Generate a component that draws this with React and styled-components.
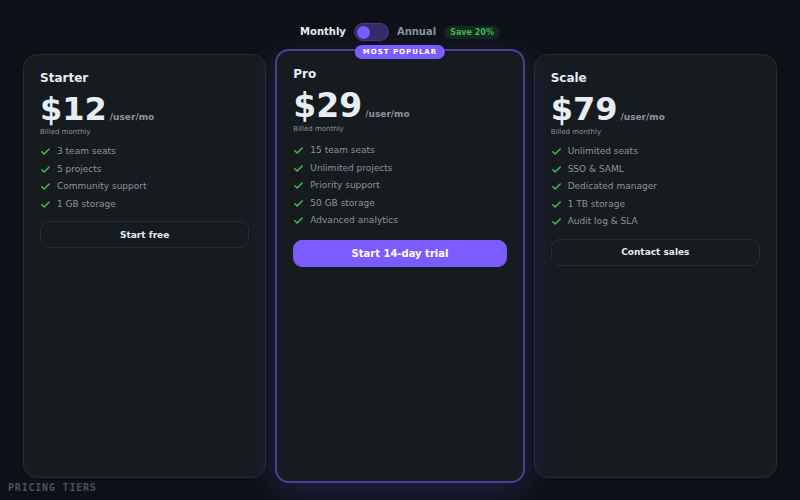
import { useState } from "react";
import styled, { createGlobalStyle, css } from "styled-components";

const tiers = [
    {
        name: "Starter",
        price: 12,
        features: ["3 team seats", "5 projects", "Community support", "1 GB storage"],
        action: "Start free",
    },
    {
        name: "Pro",
        price: 29,
        features: ["15 team seats", "Unlimited projects", "Priority support", "50 GB storage", "Advanced analytics"],
        action: "Start 14-day trial",
        popular: true,
    },
    {
        name: "Scale",
        price: 79,
        features: ["Unlimited seats", "SSO & SAML", "Dedicated manager", "1 TB storage", "Audit log & SLA"],
        action: "Contact sales",
    },
];

const CheckIcon = () => (
    <Check viewBox="0 0 24 24" aria-hidden="true">
        <path d="M4 12.5l5 5L20 6.5" />
    </Check>
);

// one pricing card, the popular one is bigger and has a badge on its top edge
const Tier = ({ tier, annual }) => {
    const price = annual ? Math.round(tier.price * 0.8) : tier.price;

    return (
        <Card $popular={tier.popular}>
            {tier.popular && <Ribbon>MOST POPULAR</Ribbon>}
            <Name>{tier.name}</Name>
            <Price $popular={tier.popular}>
                ${price}
                <Unit>/user/mo</Unit>
            </Price>
            <Billing>{annual ? "Billed annually" : "Billed monthly"}</Billing>
            <Features $popular={tier.popular}>
                {tier.features.map((feature) => (
                    <Feature key={feature}>
                        <CheckIcon />
                        {feature}
                    </Feature>
                ))}
            </Features>
            <Action type="button" $popular={tier.popular}>{tier.action}</Action>
        </Card>
    );
};

const App = () => {
    const [annual, setAnnual] = useState(false);

    return (
        <Page>
            <GlobalStyle />
            <BillingBar>
                <Period $active={!annual} htmlFor="billing">Monthly</Period>
                <Switch
                    id="billing"
                    type="checkbox"
                    role="switch"
                    checked={annual}
                    onChange={(e) => setAnnual(e.target.checked)}
                />
                <Period $active={annual} htmlFor="billing">Annual</Period>
                <Saving>Save 20%</Saving>
            </BillingBar>
            <Tiers>
                {tiers.map((tier) => (
                    <Tier key={tier.name} tier={tier} annual={annual} />
                ))}
            </Tiers>
            <Caption>PRICING TIERS</Caption>
        </Page>
    );
};

const GlobalStyle = createGlobalStyle`
    :root {
        --color-background: #0d1117;
        --color-card: #161b20;
        --color-line: #262c34;
        --color-text: #e6edf3;
        --color-muted: #8b949e;
        --color-accent: #7c5cff;
        --color-success: #3fb950;
    }
    * {
        box-sizing: border-box;
    }
    body {
        margin: 0;
        background: var(--color-background);
        color: var(--color-text);
        font-family: "DejaVu Sans", sans-serif;
    }
`
const Page = styled.main`
    position: relative;
    display: flex;
    flex-direction: column;
    gap: 13px;
    min-height: 100vh;
    padding: 23px 23px 22px;
    overflow: hidden;
`
const BillingBar = styled.div`
    display: flex;
    align-items: center;
    justify-content: center;
    gap: 8px;
`
const Period = styled.label`
    font-size: 10px;
    font-weight: 700;
    line-height: 10px;
    color: ${({ $active }) => ($active ? "var(--color-text)" : "var(--color-muted)")};
    cursor: pointer;
`
const Switch = styled.input`
    appearance: none;
    display: flex;
    align-items: center;
    width: 35px;
    height: 18px;
    margin: 0;
    padding: 0 2px;
    border: 1px solid #453b80;
    border-radius: 9px;
    background: #352b66;
    cursor: pointer;
    &::before {
        content: "";
        width: 13px;
        height: 13px;
        border-radius: 50%;
        background: var(--color-accent);
    }
    &:checked {
        justify-content: flex-end;
    }
`
const Saving = styled.span`
    padding: 0 6px;
    border-radius: 7px;
    background: #14291f;
    color: var(--color-success);
    font-size: 8px;
    font-weight: 700;
    line-height: 13px;
`
const Tiers = styled.div`
    flex: 1;
    display: grid;
    grid-template-columns: repeat(3, 1fr);
    gap: 12px;
`
const Card = styled.section`
    position: relative;
    display: flex;
    flex-direction: column;
    padding: 16px;
    border: 1px solid var(--color-line);
    border-radius: 14px;
    background: var(--color-card);
    ${({ $popular }) => $popular && css`
        z-index: 1;
        margin: -5px -3px;
        border: 2px solid #4c3d99;
        box-shadow: 0 8px 32px rgba(124, 92, 255, 0.2);
    `}
`
const Ribbon = styled.span`
    position: absolute;
    top: 1px;
    left: 50%;
    transform: translate(-50%, -50%);
    padding: 0 8px;
    border-radius: 7px;
    background: var(--color-accent);
    color: #fff;
    font-size: 7px;
    font-weight: 700;
    letter-spacing: 1px;
    line-height: 14px;
    white-space: nowrap;
`
const Name = styled.h2`
    margin: 0 0 8px;
    font-size: 12px;
    line-height: 14px;
`
const Price = styled.div`
    font-size: ${({ $popular }) => ($popular ? "33px" : "32px")};
    font-weight: 700;
    line-height: 1;
`
const Unit = styled.span`
    margin-left: 3px;
    color: var(--color-muted);
    font-size: 9px;
`
const Billing = styled.div`
    margin-top: 2px;
    color: var(--color-muted);
    font-size: 7px;
    line-height: 10px;
`
const Features = styled.ul`
    display: flex;
    flex-direction: column;
    gap: 4px;
    margin: ${({ $popular }) => ($popular ? "10px 0 12px" : "8px 0 10px")};
    padding: 0;
    list-style: none;
`
const Feature = styled.li`
    display: flex;
    align-items: center;
    gap: 6px;
    color: var(--color-muted);
    font-size: 9px;
    line-height: 1.5;
`
const Check = styled.svg`
    width: 11px;
    height: 11px;
    fill: none;
    stroke: var(--color-success);
    stroke-width: 3.5;
    stroke-linecap: round;
    stroke-linejoin: round;
`
const Action = styled.button`
    height: 27px;
    padding: 0 12px;
    border: 1px solid var(--color-line);
    border-radius: 9px;
    background: transparent;
    color: var(--color-text);
    font-family: inherit;
    font-size: 9px;
    font-weight: 700;
    cursor: pointer;
    ${({ $popular }) => $popular && css`
        border-color: var(--color-accent);
        background: var(--color-accent);
        color: #fff;
        font-size: 10px;
    `}
`
const Caption = styled.div`
    position: absolute;
    bottom: 7px;
    left: 8px;
    color: #4b525c;
    font-family: "DejaVu Sans Mono", monospace;
    font-size: 10px;
    font-weight: 700;
    letter-spacing: 0.08em;
`

export default App;
